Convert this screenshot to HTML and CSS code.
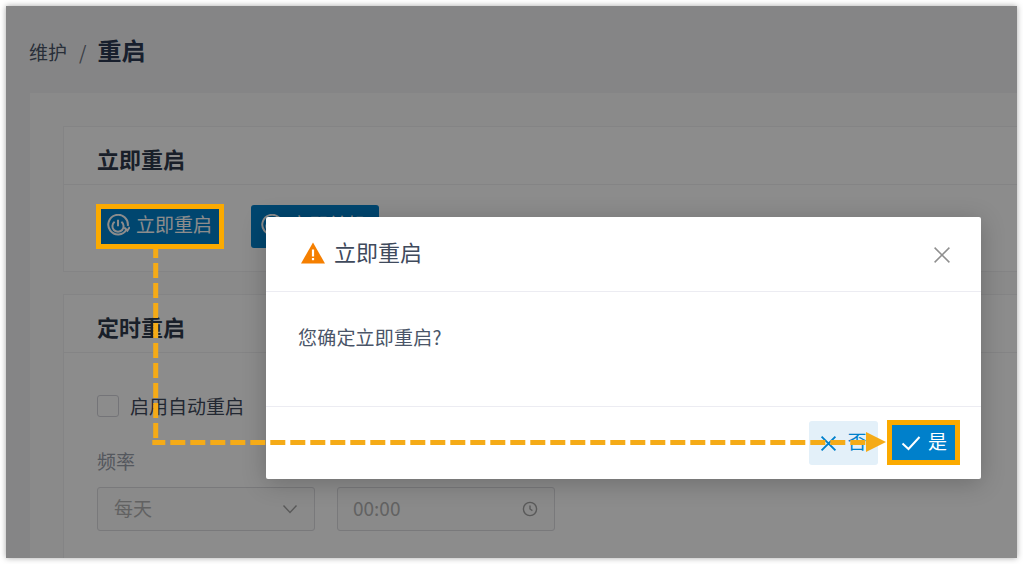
FILE: index.html
```html
<!DOCTYPE html>
<html lang="zh-CN">
<head>
    <meta charset="UTF-8">
    <title>重启</title>
    <link rel="stylesheet" href="styles.css">
</head>
<body>
    <div class="frame">
        <div class="page-header">
            <span class="crumb">维护</span>
            <span class="crumb-sep">/</span>
            <span class="crumb-current">重启</span>
        </div>

        <div class="content">
            <section class="card card-now">
                <h2 class="card-title">立即重启</h2>
                <div class="card-body btn-row">
                    <button class="btn btn-primary btn-first">
                        <svg class="icon-reboot" viewBox="0 0 24 24"><path d="M20.6 15.5A9.8 9.8 0 1 1 21.8 12"/><path d="M18.2 13.6l3.2 3 2.4-3.6"/><path d="M8.6 7.8a5.6 5.6 0 1 0 6.8 0"/><path d="M12 5.8v6.4"/></svg>
                        <span class="label">立即重启</span>
                    </button>
                    <button class="btn btn-primary">
                        <svg class="icon-reboot" viewBox="0 0 24 24"><path d="M20.6 15.5A9.8 9.8 0 1 1 21.8 12"/><path d="M8.6 7.8a5.6 5.6 0 1 0 6.8 0"/><path d="M12 5.8v6.4"/></svg>
                        <span class="label">立即关机</span>
                    </button>
                </div>
            </section>

            <section class="card card-timed">
                <h2 class="card-title">定时重启</h2>
                <div class="card-body">
                    <label class="check-row"><span class="checkbox"></span><span class="check-text">启用自动重启</span></label>
                    <div class="field-label">频率</div>
                    <div class="field-row">
                        <div class="field">
                            <span class="field-value">每天</span>
                            <svg class="field-icon" viewBox="0 0 16 16"><path d="M1.5 4.5 8 11.5l6.5-7"/></svg>
                        </div>
                        <div class="field field-time">
                            <span class="field-value">00:00</span>
                            <svg class="field-icon" viewBox="0 0 16 16"><circle cx="8" cy="8" r="6.6"/><path d="M8 4.4V8l2.4 1.6"/></svg>
                        </div>
                    </div>
                </div>
            </section>
        </div>

        <div class="mask"></div>

        <div class="dialog">
            <div class="dialog-head">
                <svg class="icon-warn" viewBox="0 0 24 22"><path d="M12 .5 24 21.5H0z"/><rect class="warn-mark" x="10.9" y="7.5" width="2.2" height="7"/><rect class="warn-mark" x="10.9" y="16" width="2.2" height="2.2"/></svg>
                <span class="dialog-title">立即重启</span>
                <svg class="icon-close" viewBox="0 0 16 16"><path d="M.6.6l14.8 14.8M15.4.6.6 15.4"/></svg>
            </div>
            <div class="dialog-body">您确定立即重启?</div>
            <div class="dialog-foot">
                <button class="btn-no">
                    <svg viewBox="0 0 16 16"><path d="M1.5 1.5l13 13M14.5 1.5l-13 13"/></svg>
                    <span class="label">否</span>
                </button>
                <button class="btn-yes">
                    <svg viewBox="0 0 20 16"><path d="M1.5 8.5 7.5 14 18.5 2"/></svg>
                    <span class="label">是</span>
                </button>
            </div>
        </div>

        <svg class="callout" viewBox="0 0 1011 552">
            <rect class="callout-box" x="92.5" y="200.5" width="123" height="40"/>
            <rect class="callout-box" x="883.5" y="416.5" width="68" height="40"/>
            <path class="callout-line callout-down" d="M149.7 243V432"/>
            <path class="callout-line callout-across" d="M146.3 436.5H860"/>
            <path class="callout-head" d="M860 426 880 436 860 446z"/>
        </svg>
    </div>
</body>
</html>
```

FILE: styles.css
```css
* {
    margin: 0;
    padding: 0;
    box-sizing: border-box;
}
html, body {
    width: 1023px;
    height: 564px;
    overflow: hidden;
    background-color: #fff;
    font-family: "Noto Sans CJK SC", "Noto Sans", sans-serif;
}
body {
    padding: 6px;
}
button {
    font-family: inherit;
    border: none;
}
.frame {
    position: relative;
    width: 1011px;
    height: 552px;
    overflow: hidden;
    background-color: #f3f3f5;
    box-shadow: 0 0 6px rgba(0, 0, 0, 0.35);
}
.page-header {
    display: flex;
    align-items: center;
    height: 87px;
    padding-left: 23px;
    color: #4a5568;
    font-size: 19px;
}
.crumb, .crumb-sep {
    margin-top: 4px;
}
.crumb-sep {
    margin-left: 12px;
    margin-right: 11px;
    color: #6b7280;
}
.crumb-current {
    font-size: 24px;
    font-weight: 700;
    color: #2c3a52;
}
.content {
    display: flex;
    flex-direction: column;
    gap: 22px;
    height: 465px;
    margin-left: 24px;
    padding: 33px 0 0 33px;
    background-color: #fbfbfb;
}
.card {
    width: 1100px;
    background-color: #fff;
    border: 1px solid #f0f0f2;
}
.card-now {
    height: 146px;
    flex-shrink: 0;
}
.card-timed {
    flex-shrink: 0;
    height: 300px;
}
.card-title {
    height: 58px;
    padding: 15px 0 0 33px;
    border-bottom: 1px solid #f0f0f2;
    font-size: 22px;
    line-height: 32px;
    font-weight: 700;
    color: #2f3a4c;
}
.card-body {
    padding: 20px 0 0 33px;
}
.btn-row {
    display: flex;
    gap: 28px;
}
.btn {
    display: flex;
    align-items: center;
    justify-content: flex-start;
    gap: 6px;
    width: 128px;
    height: 43px;
    padding-left: 9px;
    font-size: 19px;
    border-radius: 3px;
}
.btn-first {
    width: 126px;
    border-radius: 0;
}
.btn-primary {
    background-color: #0080cb;
    color: #fff;
}
.label {
    margin-bottom: 6px;
}
.icon-reboot {
    width: 24px;
    height: 24px;
    margin-bottom: 2px;
    fill: none;
    stroke: #fff;
    stroke-width: 2;
}
.check-row {
    display: flex;
    align-items: center;
    gap: 11px;
    height: 24px;
    margin-top: 21px;
    font-size: 19px;
    color: #3f4a5c;
}
.check-text {
    margin-bottom: 2px;
}
.checkbox {
    width: 22px;
    height: 22px;
    background-color: #fff;
    border: 1px solid #d4d4da;
    border-radius: 3px;
}
.field-label {
    margin-top: 29px;
    font-size: 19px;
    line-height: 28px;
    color: #9aa0ab;
}
.field-row {
    display: flex;
    gap: 22px;
    margin-top: 12px;
}
.field {
    display: flex;
    align-items: center;
    justify-content: space-between;
    width: 218px;
    height: 44px;
    padding: 0 16px;
    background-color: #fbfbfb;
    border: 1px solid #dcdce0;
    border-radius: 3px;
    font-size: 19px;
    color: #b3b3b3;
}
.field-time {
    padding-left: 15px;
}
.field-value {
    margin-bottom: 4px;
}
.field-icon {
    width: 16px;
    height: 16px;
    fill: none;
    stroke: #a3a3a3;
    stroke-width: 1.4;
}
.mask {
    position: absolute;
    inset: 0;
    background-color: rgba(0, 0, 0, 0.45);
}
.dialog {
    position: absolute;
    left: 260px;
    top: 211px;
    width: 715px;
    height: 262px;
    background-color: #fff;
    border-radius: 2px;
    box-shadow: 0 4px 24px rgba(0, 0, 0, 0.22);
}
.dialog-head {
    display: flex;
    align-items: center;
    height: 75px;
    padding: 0 31px 0 35px;
    border-bottom: 1px solid #ececf2;
}
.icon-warn {
    width: 24px;
    height: 22px;
    margin-bottom: 2px;
    fill: #f57f00;
}
.dialog-title {
    flex: 1;
    margin-left: 9px;
    margin-bottom: 6px;
    font-size: 22px;
    color: #3f4a5c;
}
.icon-close {
    width: 16px;
    height: 16px;
    margin-top: 2px;
    fill: none;
    stroke: #8f8f8f;
    stroke-width: 1.5;
}
.warn-mark {
    fill: #fff;
}
.dialog-body {
    height: 115px;
    padding: 29px 0 0 32px;
    border-bottom: 1px solid #ececf2;
    font-size: 19px;
    line-height: 32px;
    letter-spacing: 0.2px;
    color: #4a5568;
}
.dialog-foot {
    display: flex;
    justify-content: flex-end;
    gap: 10px;
    padding: 14px 22px 0 0;
}
.btn-no, .btn-yes {
    display: flex;
    align-items: center;
    justify-content: center;
    gap: 10px;
    height: 44px;
    font-size: 19px;
    border-radius: 3px;
}
.btn-no {
    width: 69px;
    background-color: #e3f0f9;
    color: #0080cb;
}
.btn-no svg {
    width: 17px;
    height: 17px;
    fill: none;
    stroke: #0080cb;
    stroke-width: 1.8;
}
.btn-yes {
    width: 71px;
    background-color: #0080cb;
    color: #fff;
    border-radius: 0;
    gap: 7px;
    padding-left: 1px;
}
.btn-yes svg {
    width: 20px;
    height: 16px;
    fill: none;
    stroke: #fff;
    stroke-width: 2;
}
/* annotation drawn over the screenshot */
.callout {
    position: absolute;
    inset: 0;
    width: 1011px;
    height: 552px;
    pointer-events: none;
}
.callout-box {
    fill: none;
    stroke: #fbaa00;
    stroke-width: 5;
}
.callout-line {
    fill: none;
    stroke: #f5ab17;
    stroke-width: 5;
    stroke-dasharray: 15 5;
}
.callout-down {
    stroke-dashoffset: 6;
}
.callout-across {
    stroke-dashoffset: 2;
}
.callout-head {
    fill: #f5ab17;
}
```
